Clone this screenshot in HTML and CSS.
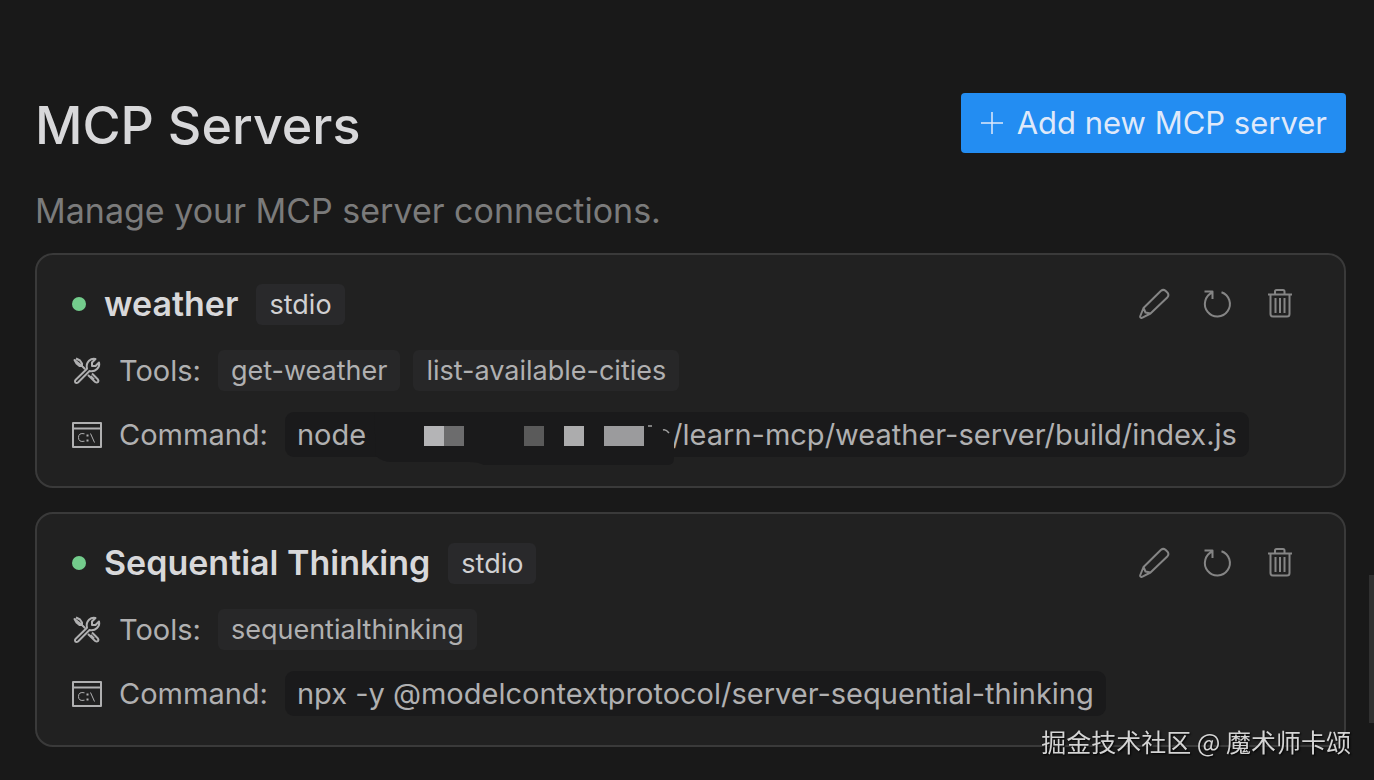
FILE: index.html
```html
<!DOCTYPE html>
<html lang="en">
<head>
<meta charset="utf-8">
<title>MCP Servers</title>
<link rel="stylesheet" href="styles.css">
</head>
<body>
<svg class="sprite" aria-hidden="true">
  <symbol id="pencil" viewBox="0 0 32 32"><path d="M3 29.800 Q1.800 29.500 2.300 28 L5.500 20 L23 2.800 Q25.300 1 27.500 2.800 L29.500 4.700 Q31.300 7 29.500 9.200 L12.500 25.500 L4.500 29.700 Q3.600 30.200 3 29.800 Z M5.500 20 L7.500 24.500 L12.500 25.500"/></symbol>
  <symbol id="refresh" viewBox="0 0 32 32"><path d="M20.500 4.200 A12.500 12.500 0 1 1 11.500 4.500 M3.500 3.500 H11.500 V11"/></symbol>
  <symbol id="trash" viewBox="0 0 32 32"><path d="M4 6.500 H28 M11 6 V3.500 Q11 2 12.500 2 H19 Q20.500 2 20.500 3.500 V6 M6.500 7 V26 Q6.500 28.500 9 28.500 H23 Q25.500 28.500 25.500 26 V7 M11.500 10 V25 M16 10 V25 M20.500 10 V25"/></symbol>
  <symbol id="tools" viewBox="0 0 30 30"><path d="M4 2.500 L8 4.500 L10 7.500 V10 L13 13 M10 10 H7.500 L4.500 7.500 L2.500 4 Z M3.500 24 L15 12.800 Q13.800 8 17 4.800 Q20 2 23.500 3 L20 6.500 V10 H23.500 L27 6.500 Q28 10 25 13 Q22 16 17.500 15 L6 26.500 Q4.500 27.500 3.300 26.500 Q2.500 25.200 3.500 24 Z M16 19 L23.200 26 Q24.800 27 26 26 Q27 24.800 25.500 23 L20 17.500 M18.500 20 L22 23.500"/></symbol>
  <symbol id="console" viewBox="0 0 30 30"><path d="M1 3 H29 V27 H1 Z M1 8.500 H29"/><path class="thin" d="M12.500 13.800 Q6.500 12.500 6.500 17.500 Q6.500 22.500 12.500 21.200 M18.500 13.500 L22.500 22.500"/><path d="M15.500 14.500 V16.500 M15.500 19.500 V21.500"/></symbol>
</svg>

<main class="page">
  <header class="page-header">
    <h1>MCP Servers</h1>
    <button class="add-button" type="button">
      <svg viewBox="0 0 24 24" aria-hidden="true"><path d="M12 1 V23 M1 12 H23"/></svg>
      Add new MCP server
    </button>
  </header>
  <p class="subtitle">Manage your MCP server connections.</p>

  <section class="servers">
    <article class="card">
      <div class="card-header">
        <span class="status"></span>
        <h2>weather</h2>
        <span class="tag transport">stdio</span>
        <div class="actions">
          <button type="button" aria-label="Edit weather"><svg><use href="#pencil"/></svg></button>
          <button type="button" aria-label="Refresh weather"><svg><use href="#refresh"/></svg></button>
          <button type="button" aria-label="Delete weather"><svg><use href="#trash"/></svg></button>
        </div>
      </div>
      <div class="row">
        <svg class="row-icon" aria-hidden="true"><use href="#tools"/></svg>
        <span class="label">Tools:</span>
        <span class="tag">get-weather</span>
        <span class="tag">list-available-cities</span>
      </div>
      <div class="row command-row">
        <svg class="row-icon" aria-hidden="true"><use href="#console"/></svg>
        <span class="label">Command:</span>
        <code class="command">node<span class="redacted"><svg class="redaction" viewBox="0 0 308 54" aria-hidden="true">
          <path fill="#1a1a1b" d="M8 0 H308 V46 Q308 53 302 53 H118 Q112 50 104 50 H26 Q16 50 10 44 Z"/>
          <path fill="#b4b4b6" d="M58 14 h20 v20 h-20 Z"/><path fill="#6c6c6d" d="M78 14 h20 v20 h-20 Z"/>
          <path fill="#5a5a5a" d="M158 14 h20 v20 h-20 Z"/><path fill="#acacad" d="M198 14 h20 v20 h-20 Z"/>
          <path fill="#9b9b9d" d="M238 14 h40 v20 h-40 Z"/>
          <path class="stroke" d="M282 14 H286 M297 18 Q300 17 303 21"/>
        </svg></span>/learn-mcp/weather-server/build/index.js</code>
      </div>
    </article>

    <article class="card">
      <div class="card-header">
        <span class="status"></span>
        <h2>Sequential Thinking</h2>
        <span class="tag transport">stdio</span>
        <div class="actions">
          <button type="button" aria-label="Edit Sequential Thinking"><svg><use href="#pencil"/></svg></button>
          <button type="button" aria-label="Refresh Sequential Thinking"><svg><use href="#refresh"/></svg></button>
          <button type="button" aria-label="Delete Sequential Thinking"><svg><use href="#trash"/></svg></button>
        </div>
      </div>
      <div class="row">
        <svg class="row-icon" aria-hidden="true"><use href="#tools"/></svg>
        <span class="label">Tools:</span>
        <span class="tag">sequentialthinking</span>
      </div>
      <div class="row command-row">
        <svg class="row-icon" aria-hidden="true"><use href="#console"/></svg>
        <span class="label">Command:</span>
        <code class="command">npx -y @modelcontextprotocol/server-sequential-thinking</code>
      </div>
    </article>
  </section>
</main>
<div class="scroll-thumb"></div>
<div class="watermark" lang="zh">掘金技术社区 @ 魔术师卡颂</div>
</body>
</html>
```

FILE: styles.css
```css
* { box-sizing: border-box; }

body {
  margin: 0;
  background: #191919;
  color: #d8d8da;
  font-family: Inter, "Liberation Sans", sans-serif;
}

svg { fill: none; stroke: currentColor; stroke-width: 2; stroke-linejoin: round; }

.sprite { position: absolute; width: 0; height: 0; }
.thin { stroke-width: 1; }

button { border: 0; font: inherit; cursor: pointer; }

.page { padding: 93px 28px 32px 35px; }

.page-header { display: flex; align-items: flex-start; justify-content: space-between; }

h1, h2, p { margin: 0; }

h1 { font-size: 52px; line-height: 66px; font-weight: 500; }

.add-button {
  display: flex;
  align-items: center;
  gap: 13px;
  height: 60px;
  padding: 0 19px;
  border-radius: 4px;
  background: #238df2;
  color: #dfe9fa;
  font-size: 31px;
  line-height: 40px;
}

.add-button svg { width: 24px; height: 24px; stroke-width: 1.5; }

.subtitle {
  margin-top: 31px;
  color: #7b7b7b;
  font-size: 34px;
  line-height: 42px;
}

.servers { display: flex; flex-direction: column; gap: 24px; margin-top: 21px; }

.card {
  padding: 28px 48px 29px 35px;
  border: 2px solid #3a3a3a;
  border-radius: 18px;
  background: #212121;
}

.card-header, .row { display: flex; align-items: center; }

.status {
  width: 14px;
  height: 14px;
  border-radius: 50%;
  background: #73cc8c;
}

h2 { margin: 0 18px; font-size: 34px; line-height: 42px; font-weight: 600; }

.tag {
  padding: 0 13px;
  border-radius: 6px;
  background: #272728;
  color: #b0b0b1;
  font-size: 27px;
  line-height: 41px;
}

.tag + .tag { margin-left: 13px; }
.transport { background: #29292b; color: #d0d0d2; }

.actions { display: flex; gap: 31px; margin-left: auto; color: #858585; }
.actions button { padding: 0; background: none; color: inherit; }
.actions svg { display: block; width: 32px; height: 32px; }

.row { margin-top: 25px; color: #b0b0b1; }
.row-icon { width: 30px; height: 30px; margin-right: 17px; }
.label { margin-right: 17px; font-size: 29px; line-height: 40px; }
.command-row { margin-top: 21px; }

.command {
  display: flex;
  padding: 0 12px;
  border-radius: 9px;
  background: #1a1a1b;
  font-family: inherit;
  font-size: 29px;
  line-height: 45px;
  white-space: pre;
}

.redacted { position: relative; width: 306px; }
.redaction { position: absolute; left: 0; top: 0; width: 308px; height: 54px; stroke: none; }
.redaction .stroke { stroke: #a0a0a0; stroke-width: 1.5; }

.scroll-thumb {
  position: fixed;
  right: 0;
  top: 575px;
  width: 5px;
  height: 148px;
  background: #303030;
}

.watermark {
  position: fixed;
  right: 23px;
  bottom: 21px;
  color: #d4d4d4;
  font-family: "Noto Sans CJK SC", sans-serif;
  font-size: 25px;
  line-height: 36px;
  text-shadow: 1px 1px 2px #000;
}
```
